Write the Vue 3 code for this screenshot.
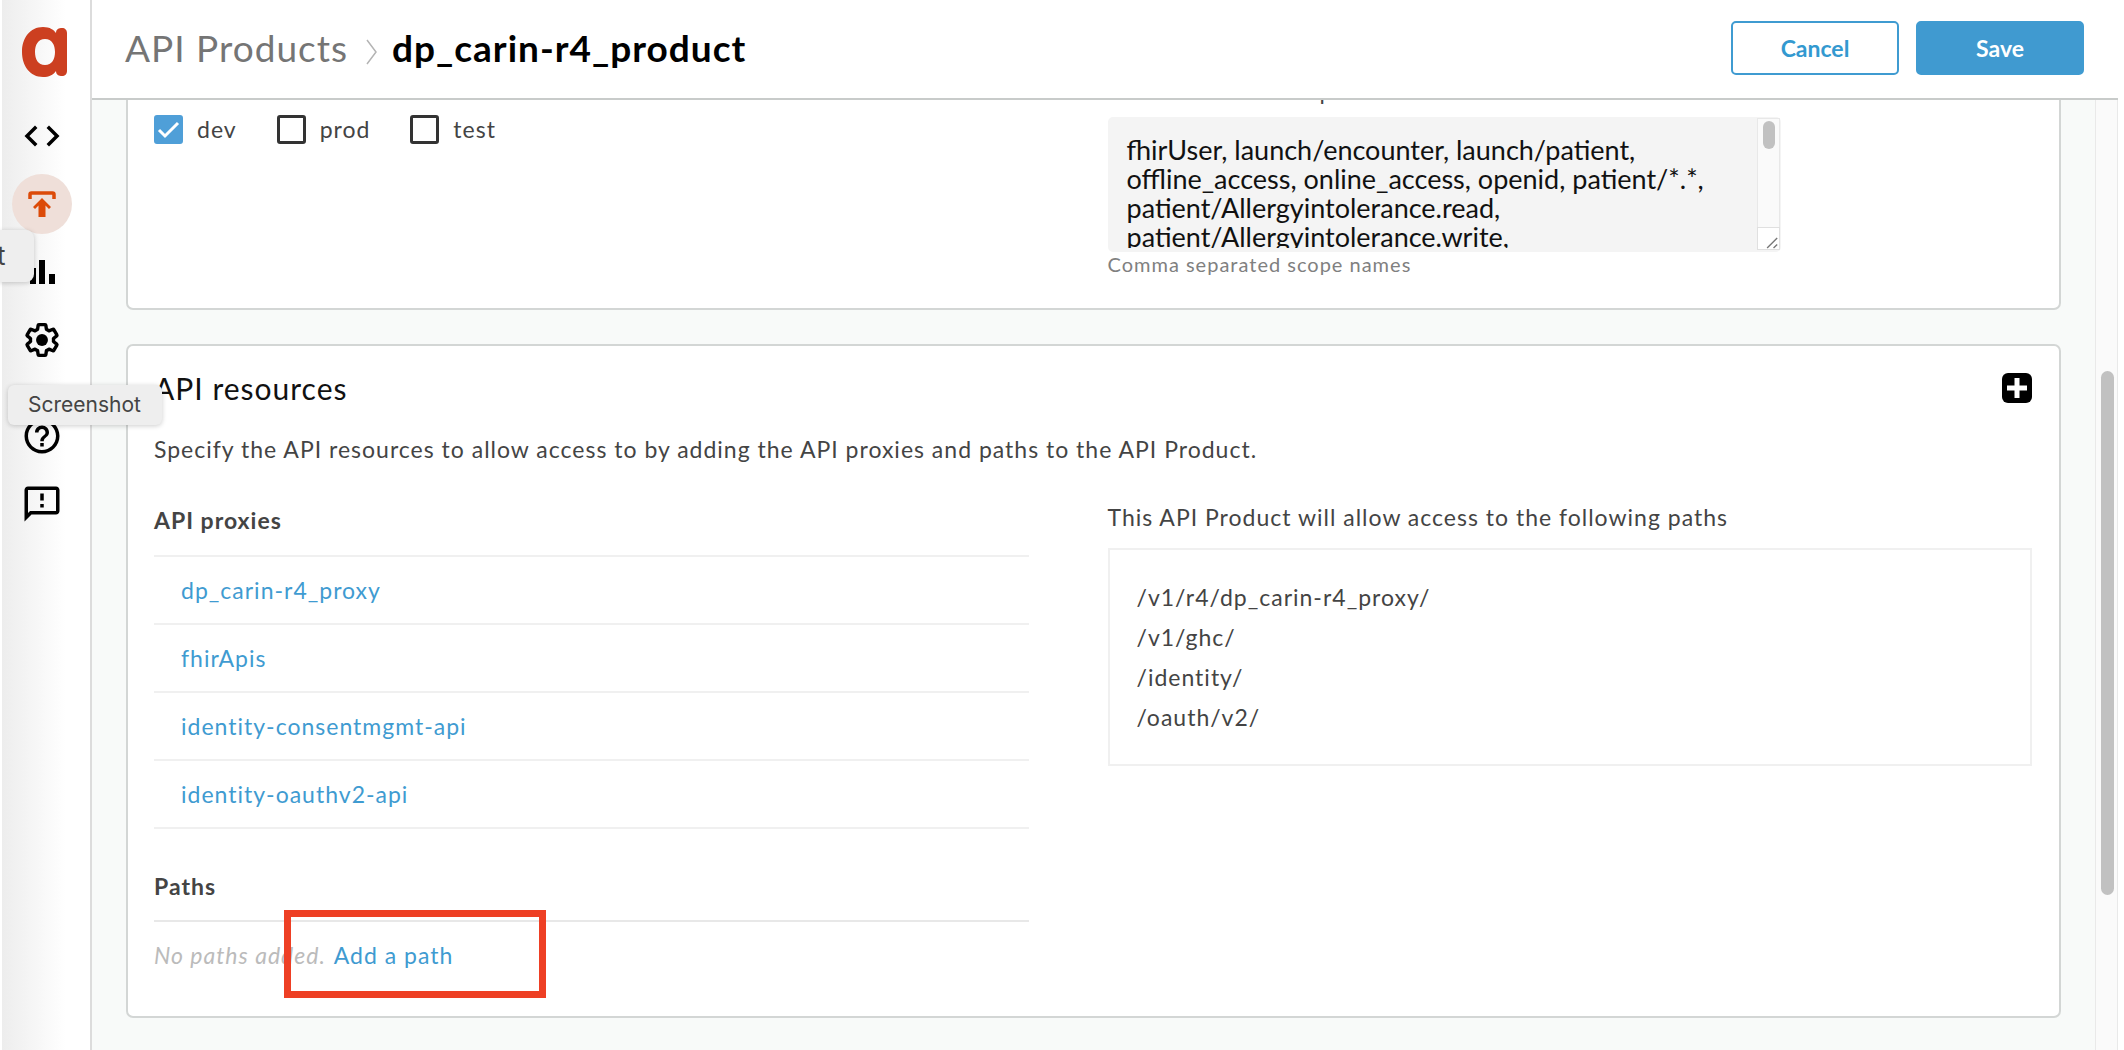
<script setup>
import { ref } from 'vue'

const environments = ref([
  { name: 'dev', checked: true },
  { name: 'prod', checked: false },
  { name: 'test', checked: false },
])
const scopes = ref(
  'fhirUser, launch/encounter, launch/patient, offline_access, online_access, openid, patient/*.*, patient/Allergyintolerance.read, patient/Allergyintolerance.write,'
)
const proxies = ['dp_carin-r4_proxy', 'fhirApis', 'identity-consentmgmt-api', 'identity-oauthv2-api']
const paths = ['/v1/r4/dp_carin-r4_proxy/', '/v1/ghc/', '/identity/', '/oauth/v2/']
</script>

<template>
  <div class="app">
    <aside class="sidebar">
      <a href="#" class="logo" aria-label="Home">
        <svg width="46" height="50" viewBox="0 0 46 50">
          <path
            fill="#cc3f20"
            fill-rule="evenodd"
            d="M21 0C28 0 32 3 34 6C34 2 37 1 40 1C43 1 45 3 45 6V44C45 47 43 49 40 49C37 49 34 48 34 44C31 48 27 50 21 50C8 50 0 39 0 25C0 11 8 0 21 0ZM23 12C16 12 13 18 13 25C13 32 16 38 23 38C30 38 33 32 33 25C33 18 30 12 23 12Z"
          />
        </svg>
      </a>
      <nav class="nav">
        <a href="#" class="nav-item" aria-label="Develop">
          <svg width="42" height="42" viewBox="0 0 24 24">
            <path d="M9.4 16.6 4.8 12l4.600-4.600L8 6l-6 6 6 6 1.400-1.400zm5.200 0 4.600-4.600-4.600-4.600L16 6l6 6-6 6-1.400-1.400z" />
          </svg>
        </a>
        <a href="#" class="nav-item active" aria-label="Publish">
          <svg width="42" height="42" viewBox="0 0 42 42">
            <path d="M9 16V11.500Q9 10 10.500 10H31.500Q33 10 33 11.500V16" fill="none" stroke="#dc4a08" stroke-width="3.500" />
            <path d="M21 15L30 24L28 26L24.500 22.500V34H17.500V22.500L14 26L12 24Z" fill="#dc4a08" />
          </svg>
        </a>
        <a href="#" class="nav-item" aria-label="Analyze">
          <svg width="42" height="42" viewBox="0 0 42 42">
            <path d="M9 17h6v16H9zM18 9h6v24h-6zM28 23h6v10h-6z" />
          </svg>
        </a>
        <a href="#" class="nav-item" aria-label="Admin">
          <svg width="42" height="42" viewBox="0 0 24 24">
            <path
              d="M19.430 12.980c.04-.32.07-.64.07-.98s-.03-.66-.07-.98l2.110-1.650c.19-.15.24-.42.12-.64l-2-3.460a.5.5 0 0 0-.61-.22l-2.490 1c-.52-.4-1.080-.73-1.690-.98l-.38-2.650A.488.488 0 0 0 14 2h-4c-.25 0-.46.18-.49.42l-.38 2.650c-.61.25-1.170.59-1.690.98l-2.490-1a.5.5 0 0 0-.61.22l-2 3.460c-.13.22-.07.49.12.64l2.110 1.650c-.04.32-.07.65-.07.98s.03.66.07.98l-2.110 1.650c-.19.15-.24.42-.12.64l2 3.460a.5.5 0 0 0 .61.22l2.490-1c.52.4 1.080.73 1.690.98l.38 2.650c.03.24.24.42.49.42h4c.25 0 .46-.18.49-.42l.38-2.650c.61-.25 1.170-.59 1.690-.98l2.490 1a.5.5 0 0 0 .61-.22l2-3.460c.12-.22.07-.49-.12-.64l-2.110-1.650z"
              transform="translate(1.440 1.440) scale(.88)"
              fill="none"
              stroke="#000"
              stroke-width="2.200"
              stroke-linejoin="round"
            />
            <circle cx="12" cy="12" r="3.400" />
          </svg>
        </a>
        <a href="#" class="nav-item help" aria-label="Help">
          <svg width="42" height="42" viewBox="0 0 24 24">
            <path
              d="M11 18h2v-2h-2v2zm1-16C6.480 2 2 6.480 2 12s4.480 10 10 10 10-4.480 10-10S17.520 2 12 2zm0 18c-4.410 0-8-3.590-8-8s3.590-8 8-8 8 3.590 8 8-3.590 8-8 8zm0-14c-2.210 0-4 1.790-4 4h2c0-1.100.9-2 2-2s2 .9 2 2c0 2-3 1.750-3 5h2c0-2.250 3-2.500 3-5 0-2.210-1.790-4-4-4z"
            />
          </svg>
        </a>
        <a href="#" class="nav-item" aria-label="Feedback">
          <svg width="42" height="42" viewBox="0 0 24 24">
            <path
              d="M20 2H4c-1.100 0-2 .9-2 2v18l4-4h14c1.100 0 2-.9 2-2V4c0-1.100-.9-2-2-2zm0 14H5.170L4 17.170V4h16v12zM11 12h2v2h-2zm0-6h2v4h-2z"
            />
          </svg>
        </a>
      </nav>
    </aside>

    <div class="main">
      <header class="header">
        <div class="crumbs">
          <a href="#" class="crumb">API Products</a>
          <svg class="chevron" width="11" height="26" viewBox="0 0 11 26">
            <path d="M1 1L10 13L1 25" fill="none" stroke="#b4b4b4" stroke-width="1.500" />
          </svg>
          <h1>dp_carin-r4_product</h1>
        </div>
        <div class="actions">
          <button type="button" class="btn">Cancel</button>
          <button type="button" class="btn primary">Save</button>
        </div>
      </header>

      <div class="viewport">
        <main class="content">
          <section class="card details">
            <div class="columns">
              <div class="environments">
                <label v-for="env in environments" :key="env.name" class="env">
                  <input v-model="env.checked" type="checkbox" />
                  <span>{{ env.name }}</span>
                </label>
              </div>
              <div class="scopes">
                <label for="scopes" class="label">Allowed OAuth scopes</label>
                <div class="textarea-wrap">
                  <textarea id="scopes" v-model="scopes"></textarea>
                  <div class="ta-track"><div class="ta-thumb"></div></div>
                  <svg class="grip" width="23" height="23" viewBox="0 0 23 23">
                    <path d="M10 22L21 11M17 22L21 18" fill="none" stroke="#777" stroke-width="1.500" />
                  </svg>
                </div>
                <p class="hint">Comma separated scope names</p>
              </div>
            </div>
          </section>

          <section class="card">
            <div class="card-head">
              <h2>API resources</h2>
              <button type="button" class="add" aria-label="Add API resource">
                <svg width="30" height="30" viewBox="0 0 30 30">
                  <rect width="30" height="30" rx="6" />
                  <path d="M15 5V25M5 15H25" stroke="#fff" stroke-width="5" />
                </svg>
              </button>
            </div>
            <p class="intro">
              Specify the API resources to allow access to by adding the API proxies and paths to the API Product.
            </p>
            <div class="columns">
              <div>
                <h3>API proxies</h3>
                <ul class="proxies">
                  <li v-for="proxy in proxies" :key="proxy"><a href="#">{{ proxy }}</a></li>
                </ul>
                <h3 class="paths-title">Paths</h3>
                <div class="empty">
                  <em>No paths added.</em>
                  <span class="add-path"><a href="#">Add a path</a><span class="highlight"></span></span>
                </div>
              </div>
              <div>
                <p class="paths-label">This API Product will allow access to the following paths</p>
                <ul class="path-list">
                  <li v-for="path in paths" :key="path">{{ path }}</li>
                </ul>
              </div>
            </div>
          </section>
        </main>
        <div class="track"><div class="thumb"></div></div>
      </div>
    </div>

    <div class="tip tip-edge">t</div>
    <div class="tip tip-shot">Screenshot</div>
  </div>
</template>

<style>
body {
  background: #fff;
}
</style>

<style scoped>
.app {
  position: relative;
  display: flex;
  height: 100vh;
  overflow: hidden;
  box-sizing: border-box;
  padding-right: 6px;
  font: 23px/30px Lato, 'Liberation Sans', sans-serif;
  letter-spacing: 1px;
  color: #444;
}
.app * {
  box-sizing: border-box;
}
h1, h2, h3, p, ul {
  margin: 0;
  padding: 0;
}
ul {
  list-style: none;
}
a {
  color: #3f9bd1;
  text-decoration: none;
}
.sidebar {
  flex: none;
  width: 92px;
  border-left: 2px solid #fff;
  border-right: 2px solid #dcdcdc;
  background: linear-gradient(90deg, #ededed, #fff 64px);
}
.logo {
  display: block;
  height: 106px;
  padding: 27px 0 0 20px;
}
.logo svg {
  display: block;
}
.nav {
  display: flex;
  flex-direction: column;
  gap: 8px;
  padding-left: 10px;
}
.nav-item {
  display: flex;
  align-items: center;
  justify-content: center;
  width: 60px;
  height: 60px;
  border-radius: 50%;
}
.nav-item.active {
  background: #efdfd9;
}
.nav-item.help {
  margin-top: 28px;
}
.main {
  flex: 1;
  min-width: 0;
  display: flex;
  flex-direction: column;
}
.header {
  display: flex;
  align-items: center;
  justify-content: space-between;
  height: 100px;
  padding: 0 34px 2px 33px;
  border-bottom: 2px solid #c8cbca;
}
.crumbs {
  display: flex;
  align-items: center;
  font-size: 37px;
  line-height: 44px;
}
.crumb {
  color: #757575;
}
.chevron {
  margin: 8px 15px 0 18px;
}
h1 {
  font-size: 37px;
  line-height: 44px;
  color: #000;
}
.actions {
  display: flex;
  gap: 17px;
}
.btn {
  width: 168px;
  height: 54px;
  padding: 0;
  border: 2px solid #3f9bd1;
  border-radius: 5px;
  background: #fff;
  color: #3399d0;
  font: bold 23px/30px Lato, 'Liberation Sans', sans-serif;
}
.btn.primary {
  background: #409ad0;
  color: #fff;
}
.viewport {
  flex: 1;
  min-height: 0;
  display: flex;
  overflow: hidden;
  background: #f8faf9;
}
.content {
  flex: 1;
  padding: 0 34px;
}
.card {
  margin-bottom: 34px;
  padding: 18px 27px 46px 26px;
  border: 2px solid #d3d6d5;
  border-radius: 7px;
  background: #fff;
}
.details {
  margin-top: -44px;
  padding-bottom: 32px;
}
.columns {
  display: grid;
  grid-template-columns: 875fr 925fr;
  column-gap: 79px;
}
.environments {
  display: flex;
  gap: 40px;
  padding-top: 38px;
}
.env {
  display: flex;
  align-items: center;
  gap: 14px;
  height: 30px;
}
.env input {
  appearance: none;
  width: 29px;
  height: 29px;
  margin: 0;
  border: 3px solid #333;
  border-radius: 3px;
}
.env input:checked {
  border-color: #4f9fd8;
  background: #4f9fd8 url("data:image/svg+xml,%3Csvg xmlns='http://www.w3.org/2000/svg' viewBox='0 0 23 23'%3E%3Cpath d='M2 12L8 18L21 5' fill='none' stroke='white' stroke-width='3'/%3E%3C/svg%3E") center / 23px no-repeat;
}
.label {
  display: block;
}
.textarea-wrap {
  position: relative;
  width: 673px;
  height: 135px;
  margin-top: 11px;
}
textarea {
  display: block;
  width: 100%;
  height: 100%;
  padding: 14px 50px 0 15px;
  border: 4px solid #f4f4f4;
  border-radius: 5px;
  background: #f4f4f4;
  color: #111;
  font: 27px/29px Lato, 'Liberation Sans', sans-serif;
  resize: none;
  overflow: hidden;
}
.ta-track {
  position: absolute;
  top: 1px;
  right: 1px;
  width: 23px;
  height: 110px;
  padding: 2px 0 0 5px;
  border: 1px solid #e8e8e8;
  background: #fafafa;
}
.ta-thumb {
  width: 12px;
  height: 28px;
  border-radius: 6px;
  background: #c1c1c1;
}
.grip {
  position: absolute;
  right: 1px;
  bottom: 2px;
  border: 1px solid #e0e0e0;
  background: #fff;
}
.hint {
  font-size: 20px;
  line-height: 24px;
  color: #808080;
}
.card-head {
  display: flex;
  align-items: center;
  justify-content: space-between;
  height: 48px;
}
h2 {
  font-size: 30px;
  font-weight: 400;
  color: #111;
}
.add {
  padding: 0;
  border: 0;
  background: none;
}
.add svg {
  display: block;
}
.intro {
  margin: 22px 0 38px;
}
h3 {
  height: 53px;
  padding-top: 3px;
  font-size: 23px;
  line-height: 30px;
}
.proxies {
  border-top: 2px solid #f0f0f0;
}
.proxies li {
  height: 68px;
  padding: 18px 27px;
  border-bottom: 2px solid #f0f0f0;
}
.paths-title {
  height: 91px;
  padding-top: 42px;
}
.empty {
  display: flex;
  gap: 8px;
  padding: 18px 0 0;
  border-top: 2px solid #e8e8e8;
}
.empty em {
  color: #bbb;
}
.add-path {
  position: relative;
}
.highlight {
  position: absolute;
  top: -30px;
  left: -50px;
  width: 262px;
  height: 88px;
  border: 7px solid #ee3f24;
  pointer-events: none;
}
.path-list {
  margin-top: 16px;
  padding: 27px;
  border: 2px solid #f0f0f0;
  line-height: 40px;
}
.track {
  flex: none;
  width: 23px;
  padding: 271px 0 0 5px;
  border: 1px solid #e9e9e9;
  border-width: 0 1px;
  background: #fafafa;
}
.thumb {
  width: 13px;
  height: 524px;
  border-radius: 7px;
  background: #c1c1c1;
}
.tip {
  position: absolute;
  left: 0;
  background: #eee;
  color: #444;
  font-family: Inter, 'Liberation Sans', sans-serif;
  letter-spacing: 0;
  box-shadow: 0 1px 5px rgba(0, 0, 0, 0.2);
}
.tip-edge {
  top: 230px;
  width: 34px;
  height: 52px;
  border-radius: 0 8px 8px 0;
  font-size: 26px;
  line-height: 52px;
  text-indent: -3px;
}
.tip-shot {
  top: 385px;
  left: 8px;
  padding: 0 21px 0 20px;
  border-radius: 6px;
  font-size: 21px;
  line-height: 40px;
}
</style>
